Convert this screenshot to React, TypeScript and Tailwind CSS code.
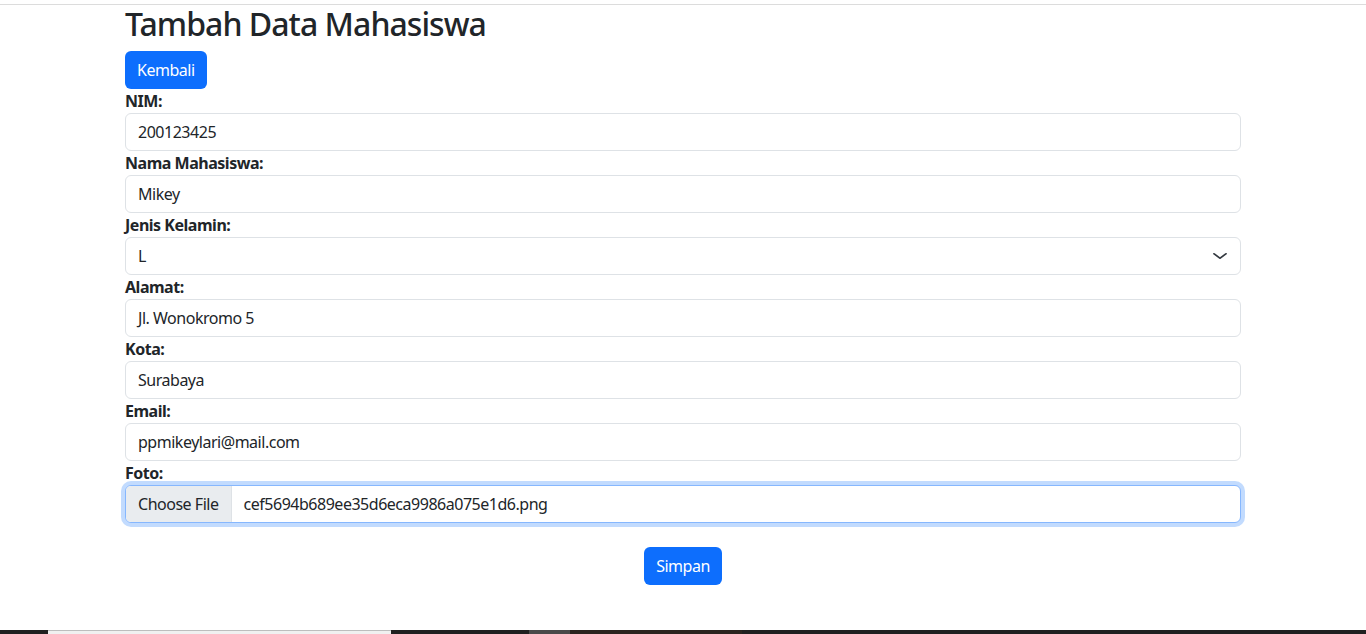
import React from "react";

const font = { fontFamily: '"Noto Sans", "Open Sans", sans-serif' };

function Label({ children }: { children: React.ReactNode }) {
  return <label className="block text-[16px] leading-[24px] font-bold tracking-[-0.03em] text-[#212529]">{children}</label>;
}

function TextInput({ value }: { value: string }) {
  return (
    <div className="h-[38px] w-full rounded-[6px] border border-[#dee2e6] bg-white px-[12px] text-[16px] leading-[36px] tracking-[-0.03em] text-[#212529]">
      {value}
    </div>
  );
}

export default function App() {
  return (
    <div className="flex h-[634px] flex-col bg-white" style={font}>
      <div className="h-[4px]" />
      <div className="h-px bg-[#dcdcdc]" />
      <div className="flex-1">
        <div className="mx-auto w-[1140px] px-[12px]">
          <h2 className="mb-[8px] text-[32px] leading-[38px] font-medium tracking-[-0.03em] text-[#212529]">Tambah Data Mahasiswa</h2>
          <button className="h-[38px] rounded-[6px] bg-[#0d6efd] px-[12px] text-[16px] leading-[24px] tracking-[-0.03em] text-white">Kembali</button>
          <div className="flex flex-col">
            <Label>NIM:</Label>
            <TextInput value="200123425" />
            <Label>Nama Mahasiswa:</Label>
            <TextInput value="Mikey" />
            <Label>Jenis Kelamin:</Label>
            <div className="flex h-[38px] w-full items-center justify-between rounded-[6px] border border-[#dee2e6] bg-white pl-[12px] pr-[12px] text-[16px] tracking-[-0.03em] text-[#212529]">
              <span>L</span>
              <svg width="16" height="12" viewBox="0 0 16 16" preserveAspectRatio="none" fill="none" stroke="#343a40" strokeWidth="2" strokeLinecap="round" strokeLinejoin="round">
                <path d="m2 5 6 6 6-6" />
              </svg>
            </div>
            <Label>Alamat:</Label>
            <TextInput value="Jl. Wonokromo 5" />
            <Label>Kota:</Label>
            <TextInput value="Surabaya" />
            <Label>Email:</Label>
            <TextInput value="ppmikeylari@mail.com" />
            <Label>Foto:</Label>
            <div className="flex h-[38px] w-full overflow-hidden rounded-[6px] border border-[#86b7fe] bg-white text-[16px] tracking-[-0.03em] text-[#212529] shadow-[0_0_0_4px_rgba(13,110,253,0.25)]">
              <span className="flex items-center border-r border-[#dee2e6] bg-[#e9ecef] px-[12px]">Choose File</span>
              <span className="flex items-center pl-[12px]">cef5694b689ee35d6eca9986a075e1d6.png</span>
            </div>
            <div className="mt-[24px] flex justify-center">
              <button className="h-[38px] rounded-[6px] bg-[#0d6efd] px-[12px] text-[16px] leading-[24px] tracking-[-0.03em] text-white">Simpan</button>
            </div>
          </div>
        </div>
      </div>
      <div className="flex h-[4px]">
        <div className="w-[48px] bg-[#202020]" />
        <div className="w-[343px] border-t border-[#bdbdbd] bg-[#f0f0f0]" />
        <div className="w-[138px] bg-[#202020]" />
        <div className="w-[41px] bg-[#4a4a4a]" />
        <div className="w-[172px] bg-[#2b241f]" />
        <div className="flex-1 bg-[#202020]" />
      </div>
    </div>
  );
}
